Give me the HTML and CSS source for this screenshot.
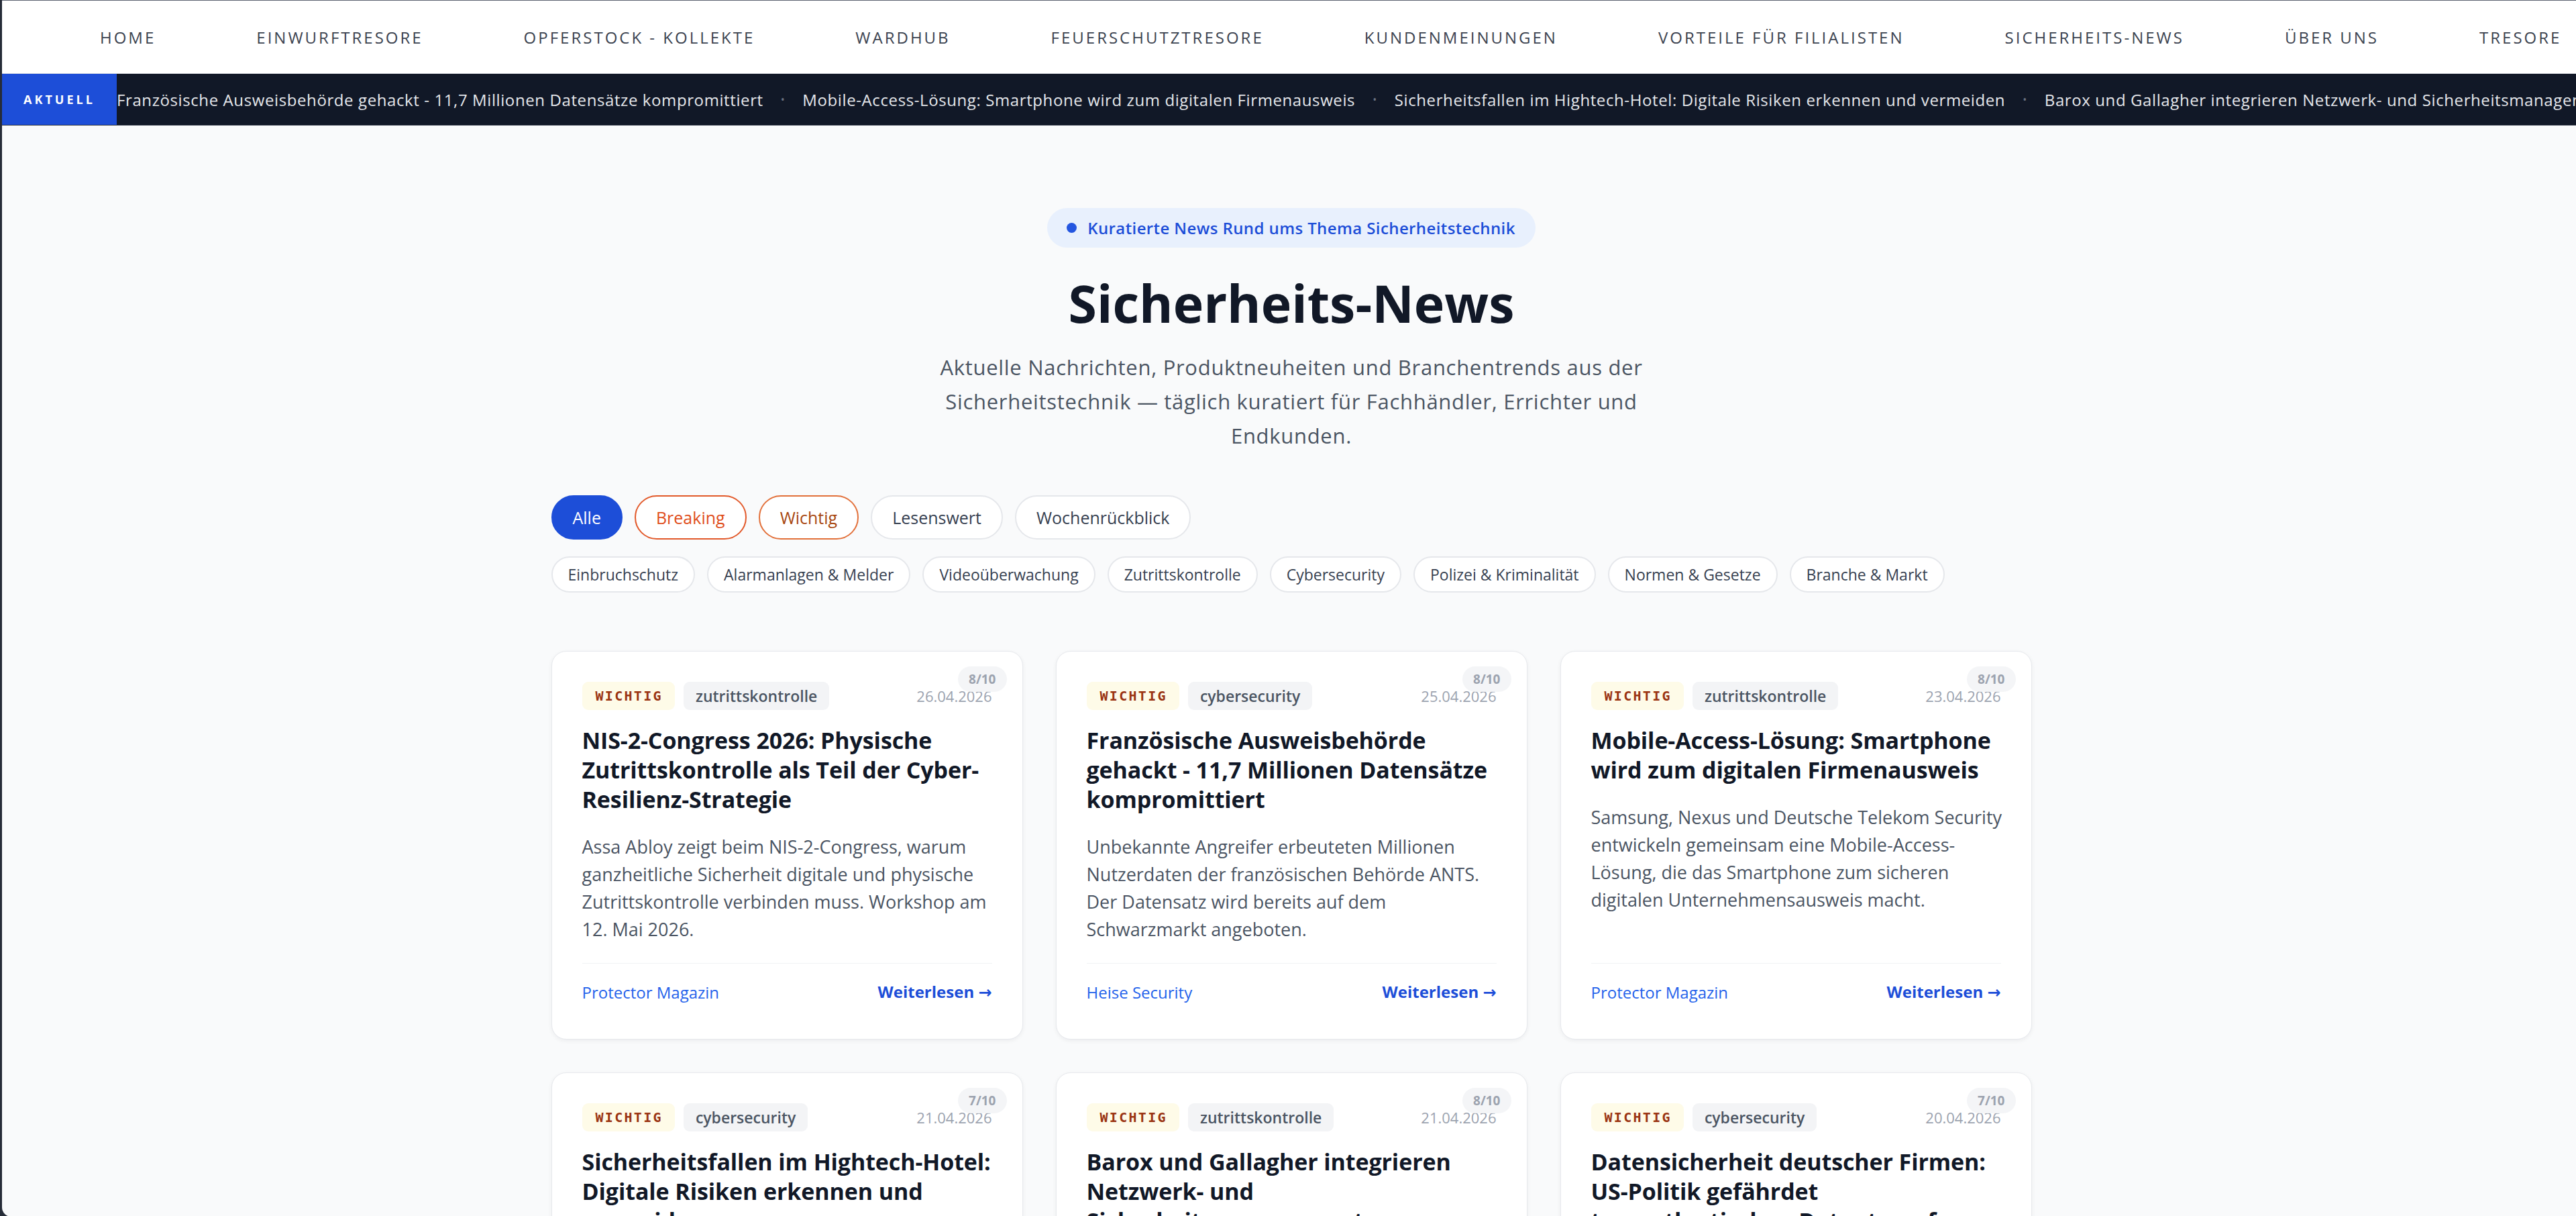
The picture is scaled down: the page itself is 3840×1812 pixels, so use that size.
FILE: index.html
```html
<!DOCTYPE html>
<html lang="de">
<head>
  <meta charset="UTF-8" />
  <meta name="viewport" content="width=device-width, initial-scale=1.0"/>
  <title>Sicherheits-News</title>
  <link rel="stylesheet" href="styles.css">
</head>
<body>
<div class="window">

  <nav class="topnav">
    <a href="#">Home</a>
    <a href="#">Einwurftresore</a>
    <a href="#">Opferstock - Kollekte</a>
    <a href="#">Wardhub</a>
    <a href="#">Feuerschutztresore</a>
    <a href="#">Kundenmeinungen</a>
    <a href="#">Vorteile für Filialisten</a>
    <a href="#">Sicherheits-News</a>
    <a href="#">Über uns</a>
    <a href="#">Tresore</a>
  </nav>

  <div class="ticker">
    <div class="ticker-label">AKTUELL</div>
    <div class="ticker-track">
      <span>Französische Ausweisbehörde gehackt - 11,7 Millionen Datensätze kompromittiert</span>
      <i class="sep">•</i>
      <span>Mobile-Access-Lösung: Smartphone wird zum digitalen Firmenausweis</span>
      <i class="sep">•</i>
      <span>Sicherheitsfallen im Hightech-Hotel: Digitale Risiken erkennen und vermeiden</span>
      <i class="sep">•</i>
      <span>Barox und Gallagher integrieren Netzwerk- und Sicherheitsmanagement</span>
      <i class="sep">•</i>
      <span>Datensicherheit deutscher Firmen: US-Politik gefährdet transatlantischen Datentransfer</span>
    </div>
  </div>

  <main class="content">
    <section class="hero">
      <div class="eyebrow"><span class="dot"></span>Kuratierte News Rund ums Thema Sicherheitstechnik</div>
      <h1>Sicherheits-News</h1>
      <p class="lead">Aktuelle Nachrichten, Produktneuheiten und Branchentrends aus der Sicherheitstechnik — täglich kuratiert für Fachhändler, Errichter und Endkunden.</p>
    </section>

    <div class="filters">
      <button class="chip active">Alle</button>
      <button class="chip breaking">Breaking</button>
      <button class="chip wichtig">Wichtig</button>
      <button class="chip">Lesenswert</button>
      <button class="chip">Wochenrückblick</button>
    </div>
    <div class="filters small">
      <button class="chip">Einbruchschutz</button>
      <button class="chip">Alarmanlagen &amp; Melder</button>
      <button class="chip">Videoüberwachung</button>
      <button class="chip">Zutrittskontrolle</button>
      <button class="chip">Cybersecurity</button>
      <button class="chip">Polizei &amp; Kriminalität</button>
      <button class="chip">Normen &amp; Gesetze</button>
      <button class="chip">Branche &amp; Markt</button>
    </div>

    <div class="grid">
      <article class="card">
        <span class="score">8/10</span>
        <div class="card-head">
          <span class="tag prio">WICHTIG</span>
          <span class="tag">zutrittskontrolle</span>
          <span class="date">26.04.2026</span>
        </div>
        <h3>NIS-2-Congress 2026: Physische Zutrittskontrolle als Teil der Cyber-Resilienz-Strategie</h3>
        <p class="desc">Assa Abloy zeigt beim NIS-2-Congress, warum ganzheitliche Sicherheit digitale und physische Zutrittskontrolle verbinden muss. Workshop am 12. Mai 2026.</p>
        <div class="card-foot">
          <a class="source" href="#">Protector Magazin</a>
          <a class="more" href="#">Weiterlesen <span class="arrow">→</span></a>
        </div>
      </article>

      <article class="card">
        <span class="score">8/10</span>
        <div class="card-head">
          <span class="tag prio">WICHTIG</span>
          <span class="tag">cybersecurity</span>
          <span class="date">25.04.2026</span>
        </div>
        <h3>Französische Ausweisbehörde gehackt - 11,7 Millionen Datensätze kompromittiert</h3>
        <p class="desc">Unbekannte Angreifer erbeuteten Millionen Nutzerdaten der französischen Behörde ANTS. Der Datensatz wird bereits auf dem Schwarzmarkt angeboten.</p>
        <div class="card-foot">
          <a class="source" href="#">Heise Security</a>
          <a class="more" href="#">Weiterlesen <span class="arrow">→</span></a>
        </div>
      </article>

      <article class="card">
        <span class="score">8/10</span>
        <div class="card-head">
          <span class="tag prio">WICHTIG</span>
          <span class="tag">zutrittskontrolle</span>
          <span class="date">23.04.2026</span>
        </div>
        <h3>Mobile-Access-Lösung: Smartphone wird zum digitalen Firmenausweis</h3>
        <p class="desc">Samsung, Nexus und Deutsche Telekom Security entwickeln gemeinsam eine Mobile-Access-Lösung, die das Smartphone zum sicheren digitalen Unternehmensausweis macht.</p>
        <div class="card-foot">
          <a class="source" href="#">Protector Magazin</a>
          <a class="more" href="#">Weiterlesen <span class="arrow">→</span></a>
        </div>
      </article>

      <article class="card">
        <span class="score">7/10</span>
        <div class="card-head">
          <span class="tag prio">WICHTIG</span>
          <span class="tag">cybersecurity</span>
          <span class="date">21.04.2026</span>
        </div>
        <h3>Sicherheitsfallen im Hightech-Hotel: Digitale Risiken erkennen und vermeiden</h3>
        <p class="desc">Smarte Zimmertechnik, offenes WLAN und digitale Schlüssel: Worauf Reisende und Betreiber achten sollten.</p>
        <div class="card-foot">
          <a class="source" href="#">Security Insider</a>
          <a class="more" href="#">Weiterlesen <span class="arrow">→</span></a>
        </div>
      </article>

      <article class="card">
        <span class="score">8/10</span>
        <div class="card-head">
          <span class="tag prio">WICHTIG</span>
          <span class="tag">zutrittskontrolle</span>
          <span class="date">21.04.2026</span>
        </div>
        <h3>Barox und Gallagher integrieren Netzwerk- und Sicherheitsmanagement</h3>
        <p class="desc">Die Switches von Barox lassen sich künftig direkt aus der Gallagher-Command-Centre-Plattform überwachen.</p>
        <div class="card-foot">
          <a class="source" href="#">Protector Magazin</a>
          <a class="more" href="#">Weiterlesen <span class="arrow">→</span></a>
        </div>
      </article>

      <article class="card">
        <span class="score">7/10</span>
        <div class="card-head">
          <span class="tag prio">WICHTIG</span>
          <span class="tag">cybersecurity</span>
          <span class="date">20.04.2026</span>
        </div>
        <h3>Datensicherheit deutscher Firmen: US-Politik gefährdet transatlantischen Datentransfer</h3>
        <p class="desc">Unternehmen in Deutschland müssen ihre Cloud-Strategie überdenken, warnen Datenschützer.</p>
        <div class="card-foot">
          <a class="source" href="#">Heise Security</a>
          <a class="more" href="#">Weiterlesen <span class="arrow">→</span></a>
        </div>
      </article>
    </div>
  </main>

</div>
</body>
</html>
```

FILE: styles.css
```css
body {
  margin: 0;
  background: #262c38;
  overflow: hidden;
  font-family: "Open Sans", "Liberation Sans", sans-serif;
  color: #111827;
}
.window {
  margin-left: 3px;
  width: 3844px;
  height: 1812px;
  background: #f9fafb;
  border-top: 1px solid #5b6270;
  border-bottom-left-radius: 14px;
  overflow: hidden;
}

/* top navigation */
.topnav {
  height: 108px;
  background: #fff;
  border-bottom: 1px solid #dfe2e7;
  display: flex;
  align-items: center;
  gap: 150px;
  padding-left: 146px;
  white-space: nowrap;
}
.topnav a {
  color: #3c4350;
  text-decoration: none;
  text-transform: uppercase;
  font-size: 24px;
  letter-spacing: 3px;
}

/* news ticker */
.ticker {
  height: 76px;
  background: #111827;
  border-bottom: 1px solid #2a3140;
  display: flex;
  align-items: center;
  overflow: hidden;
  white-space: nowrap;
}
.ticker-label {
  align-self: stretch;
  width: 171px;
  flex: none;
  background: #1d4ed8;
  color: #fff;
  font-weight: 700;
  font-size: 18px;
  letter-spacing: 4px;
  display: flex;
  align-items: center;
  justify-content: center;
}
.ticker-track {
  color: #e5e7eb;
  font-size: 24px;
  letter-spacing: 0.6px;
  display: flex;
  align-items: center;
}
.ticker-track .sep {
  font-style: normal;
  color: #6b7280;
  font-size: 16px;
  margin: 0 26px;
}

/* hero */
.content {
  max-width: 2207px;
  margin: 0 auto;
  padding-top: 123px;
}
.hero {
  text-align: center;
}
.eyebrow {
  display: inline-flex;
  align-items: center;
  gap: 16px;
  height: 59px;
  padding: 0 30px 0 29px;
  border-radius: 30px;
  background: #e8f0fd;
  color: #1d4ed8;
  font-size: 24px;
  letter-spacing: 0.4px;
  font-weight: 600;
}
.eyebrow .dot {
  width: 15px;
  height: 15px;
  border-radius: 50%;
  background: #2456e0;
}
.hero h1 {
  font-size: 77px;
  line-height: 82px;
  font-weight: 700;
  margin: 42px 0 0;
  color: #111827;
}
.lead {
  max-width: 1100px;
  margin: 29px auto 0;
  font-size: 31px;
  letter-spacing: 0.7px;
  line-height: 51px;
  color: #4b5563;
}

/* filter chips */
.filters {
  display: flex;
  flex-wrap: wrap;
  gap: 18px;
  margin-top: 63px;
}
.filters.small {
  margin-top: 25px;
}
.chip {
  font-family: inherit;
  font-size: 25px;
  line-height: 30px;
  padding: 16px 30px;
  border: 2px solid #e5e7eb;
  border-radius: 40px;
  background: #fff;
  color: #374151;
}
.filters.small .chip {
  font-size: 23px;
  line-height: 28px;
  padding: 11px 23px;
}
.chip.active {
  background: #1d4ed8;
  border-color: #1d4ed8;
  color: #fff;
}
.chip.breaking {
  color: #e04e1b;
  border-color: #e2592a;
}
.chip.wichtig {
  color: #a8470f;
  border-color: #e2703a;
}

/* cards */
.grid {
  display: grid;
  grid-template-columns: repeat(3, 1fr);
  gap: 49px;
  margin-top: 87px;
}
.card {
  position: relative;
  background: #fff;
  border: 1px solid #e7e9ed;
  border-radius: 22px;
  box-shadow: 0 2px 6px rgba(15, 23, 42, 0.06);
  padding: 45px 45px 53px;
  display: flex;
  flex-direction: column;
}
.score {
  position: absolute;
  top: 22px;
  right: 23px;
  padding: 3px 16px;
  border-radius: 20px;
  background: rgba(243, 244, 246, 0.92);
  color: #9ca3af;
  font-size: 19px;
  font-weight: 700;
  line-height: 32px;
}
.card-head {
  display: flex;
  align-items: center;
  gap: 13px;
  height: 42px;
}
.tag {
  height: 42px;
  display: inline-flex;
  align-items: center;
  padding: 0 18px;
  border-radius: 9px;
  background: #f3f4f6;
  color: #4b5563;
  font-size: 23px;
  font-weight: 600;
}
.tag.prio {
  background: #fefbe8;
  color: #9a3412;
  font-family: "DejaVu Sans Mono", "Liberation Mono", monospace;
  font-weight: 700;
  font-size: 20px;
  letter-spacing: 2.3px;
  padding: 0 18px 0 20px;
}
.date {
  margin-left: auto;
  color: #9ca3af;
  font-size: 22px;
}
.card h3 {
  margin: 23px -10px 0 0;
  font-size: 34px;
  letter-spacing: -0.1px;
  line-height: 44px;
  font-weight: 700;
  color: #111827;
}
.desc {
  margin: 28px -8px 30px 0;
  font-size: 27px;
  line-height: 41px;
  color: #4b5563;
}
.card-foot {
  margin-top: auto;
  border-top: 1px solid #f1f2f4;
  padding-top: 26px;
  display: flex;
  justify-content: space-between;
  align-items: center;
  line-height: 32px;
}
.source {
  color: #2563eb;
  text-decoration: none;
  font-size: 24px;
}
.more {
  color: #1d4ed8;
  text-decoration: none;
  font-weight: 700;
  font-size: 24px;
}
.more .arrow {
  font-family: "DejaVu Sans", sans-serif;
  font-weight: 700;
}
```
